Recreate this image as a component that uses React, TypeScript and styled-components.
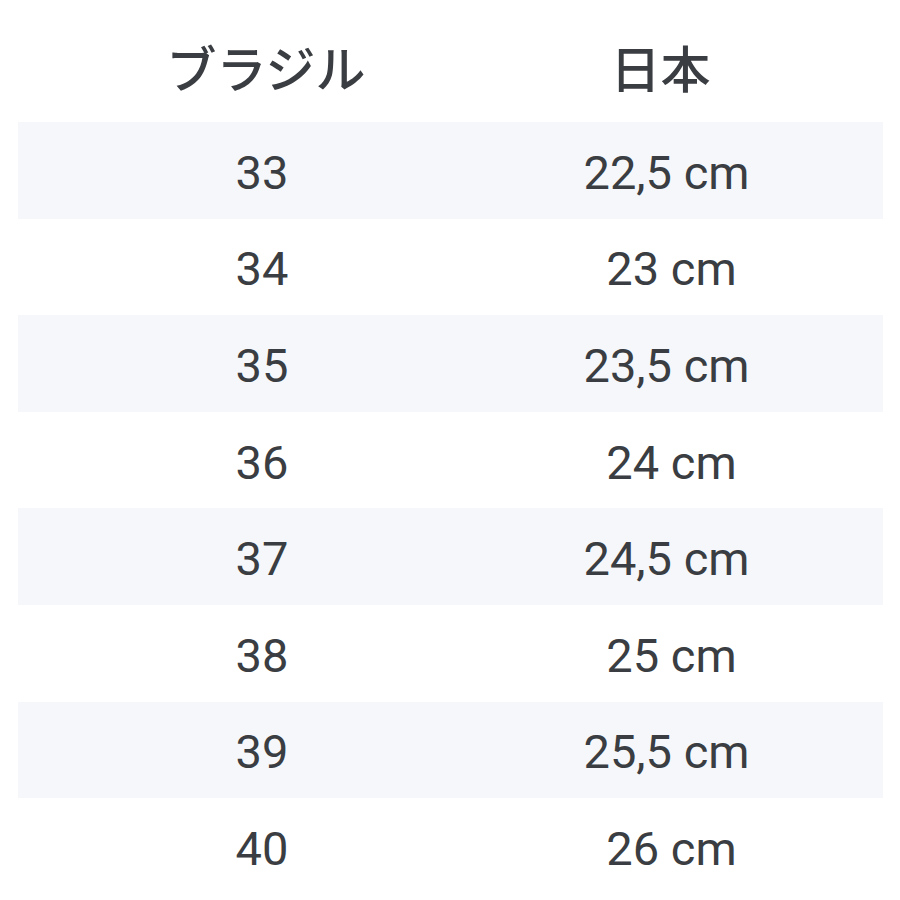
import styled, { createGlobalStyle } from "styled-components";

const GlobalStyle = createGlobalStyle`
  html, body {
    margin: 0;
    padding: 0;
    background: #ffffff;
  }
`;

const Page = styled.div`
  width: 900px;
  height: 900px;
  padding: 0 17px 0 18px;
  box-sizing: border-box;
  background: #ffffff;
  color: #3a3d41;
`;

const Header = styled.div`
  display: grid;
  grid-template-columns: 488px 1fr;
  height: 122px;
  align-items: center;
  font-family: "Noto Sans CJK JP", "Noto Sans", sans-serif;
  font-size: 50px;
  font-weight: 500;
`;

const Row = styled.div<{ $shaded: boolean }>`
  display: grid;
  grid-template-columns: 488px 1fr;
  height: 96.6px;
  align-items: center;
  background: ${(p) => (p.$shaded ? "#f5f7fa" : "transparent")};
  font-family: Roboto, "Liberation Sans", sans-serif;
  font-size: 47px;
`;

const Cell = styled.div<{ $offset?: number }>`
  text-align: center;
  padding-right: ${(p) => Math.max(p.$offset ?? 0, 0)}px;
  padding-left: ${(p) => Math.max(-(p.$offset ?? 0), 0)}px;
  padding-top: 4px;
`;

const HeaderCell = styled(Cell)`
  padding-top: 10px;
`;

const rows: [string, string][] = [
  ["33", "22,5 cm"],
  ["34", "23 cm"],
  ["35", "23,5 cm"],
  ["36", "24 cm"],
  ["37", "24,5 cm"],
  ["38", "25 cm"],
  ["39", "25,5 cm"],
  ["40", "26 cm"],
];

export default function App() {
  return (
    <>
      <GlobalStyle />
      <Page>
        <Header>
          <HeaderCell $offset={-8}>ブラジル</HeaderCell>
          <HeaderCell $offset={68}>日本</HeaderCell>
        </Header>
        {rows.map(([br, jp], i) => (
          <Row key={br} $shaded={i % 2 === 0}>
            <Cell>{br}</Cell>
            <Cell $offset={jp.includes(",") ? 56 : 46}>{jp}</Cell>
          </Row>
        ))}
      </Page>
    </>
  );
}
